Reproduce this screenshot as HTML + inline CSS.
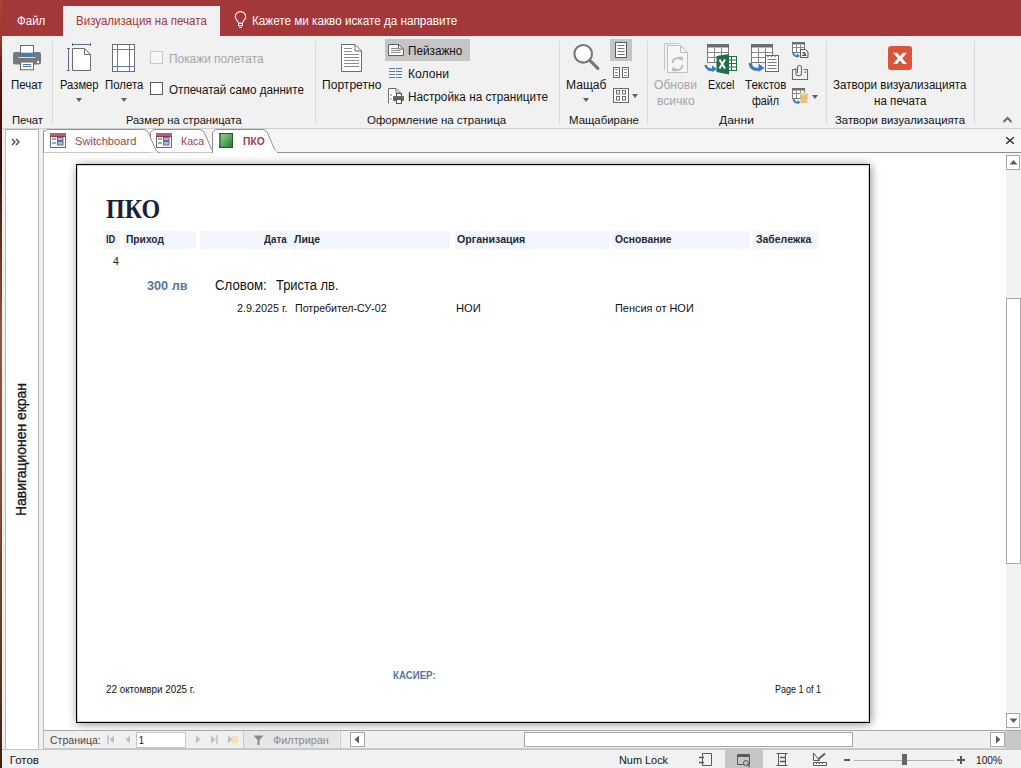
<!DOCTYPE html>
<html><head><meta charset="utf-8">
<style>
*{margin:0;padding:0;box-sizing:border-box}
html,body{width:1021px;height:768px;overflow:hidden;background:#fff;font-family:"Liberation Sans",sans-serif;position:relative}
.a{position:absolute;white-space:nowrap}
.t{font-size:12px;color:#262626;line-height:14px}
.sep{position:absolute;width:1px;background:#dadada}
.glab{position:absolute;font-size:12px;color:#262626;line-height:14px;top:113px}
.arr{position:absolute;width:0;height:0;border-left:3.5px solid transparent;border-right:3.5px solid transparent;border-top:4px solid #606060}
.rep{font-family:"Liberation Sans",sans-serif}
</style></head><body>
<!-- title/tab bar -->
<div class="a" style="left:0;top:0;width:1021px;height:36px;background:#a4373a"></div>
<div class="a" style="left:0;top:0;width:2px;height:768px;background:linear-gradient(#b04430 0px,#a03828 36px,#5a1410 80px,#3a0c08 160px,#6a3a22 260px,#8a5a3a 330px,#7a4a2e 520px,#5a3420 680px,#3a2212 768px)"></div>
<div class="a" style="left:63px;top:6px;width:157px;height:32px;background:#f1f1f1"></div>
<svg class="a" style="left:230px;top:8px" width="22" height="24" viewBox="230 8 22 24"><path d="M238.5 23.3c0-2-3.2-3.6-3.2-6.5a5.2 5.2 0 0 1 10.4 0c0 2.9-3.2 4.5-3.2 6.5z" fill="none" stroke="#fff" stroke-width="1.1"/><rect x="238.5" y="23.5" width="4" height="2.2" fill="none" stroke="#fff"/><path d="M239 27.5h3" stroke="#fff"/></svg>

<!-- ribbon -->
<div class="a" style="left:2px;top:36px;width:1019px;height:93px;background:#f1f1f1"></div>
<div class="a" style="left:2px;top:128px;width:1019px;height:1px;background:#d4d4d4"></div>


<!-- ===== Печат group ===== -->
<svg class="a" style="left:8px;top:40px" width="40" height="36" viewBox="8 40 40 36">
<rect x="13" y="52" width="28" height="12.5" rx="2.2" fill="#787878"/>
<rect x="20.5" y="45.5" width="13" height="8" fill="#fff" stroke="#6a6a6a"/>
<rect x="19" y="52.7" width="16" height="4" fill="#4a78b0"/>
<rect x="18.5" y="57" width="17" height="1" fill="#d8dde5"/>
<rect x="37" y="61" width="2" height="2" fill="#fff"/>
<rect x="20.5" y="62" width="13" height="7.8" fill="#fff" stroke="#6a6a6a"/>
<path d="M23 64.5h8M23 66.5h8" stroke="#4a78b0"/>
</svg>
<div class="sep" style="left:52px;top:41px;height:83px"></div>

<!-- ===== Размер на страницата ===== -->
<svg class="a" style="left:62px;top:40px" width="40" height="34" viewBox="62 40 40 34">
<path d="M72.5 44.5h18M72.5 43v3M90.5 43v3" stroke="#5a6f8f"/>
<path d="M68.5 48.5v22M67 48.5h3M67 70.5h3" stroke="#5a6f8f"/>
<path d="M72.5 48.5H84.5L90.5 54.5V70.5H72.5Z" fill="#fff" stroke="#6d6d6d"/>
<path d="M84.5 48.5V54.5H90.5" fill="none" stroke="#6d6d6d"/>
</svg>
<div class="arr" style="left:76px;top:98px"></div>
<svg class="a" style="left:108px;top:40px" width="32" height="34" viewBox="108 40 32 34">
<rect x="112.5" y="44.5" width="22" height="27" fill="#fff" stroke="#6d6d6d"/>
<path d="M117.5 44.5v27M129.5 44.5v27M112.5 49.5h22M112.5 66.5h22" stroke="#5b7fae"/>
</svg>
<div class="arr" style="left:121px;top:98px"></div>
<div class="a" style="left:150px;top:51px;width:13px;height:13px;border:1px solid #c8c8c8;background:#f7f7f7"></div>
<div class="a" style="left:150px;top:82px;width:13px;height:13px;border:1px solid #5a5a5a;background:#fff"></div>
<div class="sep" style="left:315px;top:41px;height:83px"></div>

<!-- ===== Оформление на страница ===== -->
<div class="a" style="left:385px;top:39px;width:85px;height:22px;background:#c5c5c5"></div>
<svg class="a" style="left:330px;top:38px" width="90" height="70" viewBox="330 38 90 70">
<path d="M341.5 44.5H355L361.5 51V71.5H341.5Z" fill="#fff" stroke="#6d6d6d"/>
<path d="M355 44.5V51H361.5" fill="none" stroke="#6d6d6d"/>
<path d="M344 48.5h8M344 51.5h8M344 54.5h15M344 57.5h15M344 60.5h15M344 63.5h15M344 66.5h15" stroke="#8c8c8c"/>
<path d="M388.5 44.5H398.5L403.5 49V55.5H388.5Z" fill="#fff" stroke="#5f5f5f"/>
<path d="M398.5 44.5V49H403.5" fill="none" stroke="#5f5f5f"/>
<path d="M391 48.5h8M391 50.5h9.5M391 52.5h9.5" stroke="#8a8a8a"/>
<path d="M389 68.5h6M389 71.5h6M389 74.5h6M389 77.5h6M396 68.5h6M396 71.5h6M396 74.5h6M396 77.5h6" stroke="#5a7aa8"/>
<path d="M388.5 103.5V88.5H396L400.5 93V95" fill="#fff" stroke="#6d6d6d"/>
<path d="M396 88.5V93H400.5" fill="none" stroke="#6d6d6d"/>
<circle cx="391" cy="95" r="1" fill="#9a9a9a"/>
<path d="M390 99h2" stroke="#9a9a9a"/>
<rect x="396.5" y="93.5" width="5" height="3" fill="#fff" stroke="#555"/>
<rect x="393" y="96" width="11" height="5" rx="1" fill="#666"/>
<rect x="396.5" y="99.5" width="5" height="4" fill="#fff" stroke="#555"/>
</svg>
<div class="sep" style="left:559px;top:41px;height:83px"></div>

<!-- ===== Мащабиране ===== -->
<svg class="a" style="left:568px;top:38px" width="70" height="68" viewBox="568 38 70 68">
<circle cx="583.2" cy="53.8" r="8.8" fill="#fff" stroke="#767676" stroke-width="2.1"/>
<path d="M589.8 60.4l8 8" stroke="#767676" stroke-width="3.2" stroke-linecap="round"/>
</svg>
<div class="a" style="left:583px;top:98px;width:0;height:0;border-left:3.5px solid transparent;border-right:3.5px solid transparent;border-top:4px solid #606060"></div>
<div class="a" style="left:610px;top:39px;width:22px;height:22px;background:#c5c5c5"></div>
<svg class="a" style="left:605px;top:38px" width="35" height="68" viewBox="605 38 35 68">
<rect x="615.5" y="42.5" width="11" height="15" fill="#fff" stroke="#5a5a5a"/>
<path d="M617.5 45.5h7M617.5 48.5h7M617.5 51.5h7M617.5 54.5h7" stroke="#7a7a7a"/>
<rect x="613.5" y="67.5" width="6" height="10" fill="#fff" stroke="#6d6d6d"/>
<rect x="622.5" y="67.5" width="6" height="10" fill="#fff" stroke="#6d6d6d"/>
<path d="M615 69.5h3M615 72.5h3M615 75.5h3M624 69.5h3M624 72.5h3M624 75.5h3" stroke="#8a8a8a"/>
<rect x="613.5" y="88.5" width="15" height="14" fill="#fff" stroke="#6d6d6d"/>
<rect x="616.5" y="90.5" width="3" height="3.5" fill="none" stroke="#6d6d6d"/>
<rect x="622.5" y="90.5" width="3" height="3.5" fill="none" stroke="#6d6d6d"/>
<rect x="616.5" y="96.5" width="3" height="3.5" fill="none" stroke="#6d6d6d"/>
<rect x="622.5" y="96.5" width="3" height="3.5" fill="none" stroke="#6d6d6d"/>
</svg>
<div class="arr" style="left:632px;top:94px"></div>
<div class="sep" style="left:647px;top:41px;height:83px"></div>

<!-- ===== Данни ===== -->
<svg class="a" style="left:650px;top:38px" width="180" height="72" viewBox="650 38 180 72">
<!-- refresh -->
<path d="M664.5 70V43.5H679" fill="none" stroke="#c6c6c6"/>
<path d="M667.5 45.5H680.5L687.5 52.5V72.5H667.5Z" fill="#f6f6f6" stroke="#c0c0c0"/>
<path d="M680.5 45.5V52.5H687.5" fill="none" stroke="#c0c0c0"/>
<path d="M672.5 63a5 5 0 0 1 8.5-3.5" fill="none" stroke="#bdbdbd" stroke-width="2"/>
<path d="M682.5 65a5 5 0 0 1-8.5 3.5" fill="none" stroke="#bdbdbd" stroke-width="2"/>
<path d="M678.5 56.5l4.5 0.5-0.5 4.5z" fill="#bdbdbd"/>
<path d="M676.5 71.5l-4.5-0.5 0.5-4.5z" fill="#bdbdbd"/>
<!-- excel -->
<rect x="707.5" y="44.5" width="21" height="18" fill="#fff" stroke="#7a7a7a"/>
<rect x="707" y="44" width="22" height="3.5" fill="#6d6d6d"/>
<path d="M714.5 47.5v15M721.5 47.5v15M707.5 52.5h21M707.5 57.5h21" stroke="#8a8a8a"/>
<rect x="727.5" y="56.5" width="9" height="14" fill="#fff" stroke="#1e7145"/>
<path d="M727.5 60h9M727.5 63.5h9M727.5 67h9M731.5 56.5v14" stroke="#1e7145"/>
<path d="M716.5 56L729 54V74.5L716.5 72Z" fill="#1e7145"/>
<path d="M719.5 59.5l5.5 9M725 59.5l-5.5 9" stroke="#fff" stroke-width="2"/>
<path d="M705.5 65c1 4 5 6 8.5 4" fill="none" stroke="#3f78c0" stroke-width="2.6"/>
<path d="M712 65.5l5 3.5-5 3z" fill="#3f78c0"/>
<!-- text file -->
<rect x="751.5" y="44.5" width="21" height="18" fill="#fff" stroke="#7a7a7a"/>
<rect x="751" y="44" width="22" height="3.5" fill="#6d6d6d"/>
<path d="M758.5 47.5v15M765.5 47.5v15M751.5 52.5h21M751.5 57.5h21" stroke="#8a8a8a"/>
<rect x="765.5" y="55.5" width="13" height="16" fill="#fff" stroke="#6a6a6a"/>
<path d="M768 55v2M771.5 55v2M775 55v2" stroke="#6a6a6a" stroke-width="1.2"/>
<path d="M767.5 59.5h9M767.5 62.5h9M767.5 65.5h9M767.5 68.5h9" stroke="#7a7a7a"/>
<path d="M750 63c1 6 6 8 11 5" fill="none" stroke="#3f78c0" stroke-width="3.2"/>
<path d="M758.5 63.5l6 4.5-6 4z" fill="#3f78c0"/>
<!-- small 1 -->
<rect x="792.5" y="42.5" width="12" height="10" fill="#fff" stroke="#7a7a7a"/>
<rect x="792" y="42" width="13" height="2.5" fill="#6d6d6d"/>
<path d="M796.5 44.5v8M800.5 44.5v8M792.5 47.5h12" stroke="#8a8a8a"/>
<path d="M800.5 49.5h5l2.5 2.5v5.5h-7.5z" fill="#fff" stroke="#555"/>
<path d="M802 55.5h4.5M804.2 52v3.5M802.5 52.5l3.5 2" stroke="#555" stroke-width="1.2"/>
<path d="M793 52.5c0.5 3 3 4.5 5.5 3" fill="none" stroke="#3f78c0" stroke-width="1.8"/>
<path d="M797 53.5l3 2.5-3 1.8z" fill="#3f78c0"/>
<!-- attachment -->
<path d="M795.5 69.5h-3v10h15v-10h-4" fill="none" stroke="#6a6a6a" stroke-width="1.1"/>
<path d="M797.5 73V67.5a2 2 0 0 1 4 0V73a2.8 2.8 0 0 1-5.6 0V68" fill="none" stroke="#6a6a6a" stroke-width="1.1"/>
<rect x="804.5" y="71.5" width="1.5" height="1.5" fill="#6a6a6a"/>
<!-- small 3 -->
<rect x="792.5" y="88.5" width="12" height="10" fill="#fff" stroke="#7a7a7a"/>
<rect x="792" y="88" width="13" height="2.5" fill="#6d6d6d"/>
<path d="M796.5 90.5v8M800.5 90.5v8M792.5 93.5h12" stroke="#8a8a8a"/>
<path d="M800 93.5h8l-0.8 9.5h-6.4z" fill="#e6c27a"/>
<ellipse cx="804" cy="93.5" rx="4" ry="1.3" fill="#f1d9a6"/>
<path d="M793.5 99c0.5 3 3 4.5 5.5 3" fill="none" stroke="#3f78c0" stroke-width="1.8"/>
<path d="M797.5 100l3 2.5-3 1.8z" fill="#3f78c0"/>
</svg>
<div class="arr" style="left:812px;top:95px"></div>
<div class="sep" style="left:826px;top:41px;height:83px"></div>

<!-- ===== Затвори ===== -->
<div class="a" style="left:888px;top:46px;width:24px;height:24px;background:#d8553a;border-radius:3px"></div>
<svg class="a" style="left:888px;top:46px" width="24" height="24" viewBox="888 46 24 24"><path d="M893 52.7h4.2l2.8 3.6 2.8-3.6h4.2l-4.8 5.6 4.8 5.6h-4.2l-2.8-3.6-2.8 3.6h-4.2l4.8-5.6z" fill="#fff"/></svg>
<div class="sep" style="left:974px;top:41px;height:83px"></div>
<svg class="a" style="left:1000px;top:114px" width="16" height="12" viewBox="1000 114 16 12"><path d="M1003.5 122l4-4 4 4" fill="none" stroke="#6a6a6a" stroke-width="2"/></svg>


<!-- ===== nav pane ===== -->
<div class="a" style="left:2px;top:129px;width:4px;height:621px;background:#f1f1f1"></div>
<div class="a" style="left:5px;top:129px;width:34px;height:620px;background:#fff;border-left:1px solid #b9b9b9;border-right:1px solid #b9b9b9;border-top:1px solid #b0b0b0"></div>
<div class="a" style="left:39px;top:129px;width:5px;height:620px;background:#f1f1f1"></div>
<div class="a" style="left:43px;top:129px;width:1px;height:620px;background:#b9b9b9"></div>
<svg class="a" style="left:11px;top:138px" width="10" height="8" viewBox="0 0 10 8"><path d="M1 1l3 3-3 3M5 1l3 3-3 3" fill="none" stroke="#444" stroke-width="1.3"/></svg>
<div class="a" style="left:12px;top:516px;transform:rotate(-90deg) scaleX(0.995);transform-origin:0 0;font-size:14px;color:#1a1a1a;line-height:18px;-webkit-text-stroke:0.35px #1a1a1a">Навигационен екран</div>

<!-- ===== document tabs row ===== -->
<div class="a" style="left:44px;top:129px;width:977px;height:24px;background:#f5f5f5"></div>
<div class="a" style="left:2px;top:128px;width:1019px;height:1px;background:#cfcfcf"></div>
<div class="a" style="left:44px;top:152px;width:977px;height:1px;background:#8f8f8f"></div>
<svg class="a" style="left:40px;top:127px" width="260" height="27" viewBox="40 127 260 27">
<path d="M150.5 152.5V132.5l3-3H199c3 0 4.5 1.5 6 4.5l5.5 13c1.5 3.5 2.5 5.5 5.5 5.5" fill="#fff" stroke="#8f8f8f"/>
<path d="M43.5 152.5V132.5l3-3H143c3 0 4.5 1.5 6 4.5l5.5 13c1.5 3.5 2.5 5.5 5.5 5.5" fill="#fff" stroke="#8f8f8f"/>
<path d="M212.5 153V132.5l3-3H262c3 0 4.5 1.5 6 4.5l5.5 13c1.5 3.5 2.5 5.5 5.5 5.5H300" fill="#fff" stroke="#8f8f8f"/>
<rect x="213" y="151" width="64" height="3" fill="#fff"/>
</svg>
<svg class="a" style="left:50px;top:133px" width="16" height="15" viewBox="0 0 16 15">
<rect x="0.5" y="0.5" width="15" height="14" fill="#f6f7fc" stroke="#666c7e"/>
<rect x="0" y="0" width="16" height="3" fill="#c05a78"/>
<path d="M0.5 3.5h15" stroke="#8a3a52"/>
<path d="M2 6h4M2 10h4" stroke="#4e5666"/>
<rect x="7.5" y="4.5" width="5.5" height="3" fill="#a6bcdc" stroke="#5a7294"/>
<rect x="7.5" y="8.5" width="5.5" height="3.5" fill="#a6bcdc" stroke="#5a7294"/>
</svg>
<svg class="a" style="left:156px;top:133px" width="16" height="15" viewBox="0 0 16 15">
<rect x="0.5" y="0.5" width="15" height="14" fill="#f6f7fc" stroke="#666c7e"/>
<rect x="0" y="0" width="16" height="3" fill="#c05a78"/>
<path d="M0.5 3.5h15" stroke="#8a3a52"/>
<path d="M2 6h4M2 10h4" stroke="#4e5666"/>
<rect x="7.5" y="4.5" width="5.5" height="3" fill="#a6bcdc" stroke="#5a7294"/>
<rect x="7.5" y="8.5" width="5.5" height="3.5" fill="#a6bcdc" stroke="#5a7294"/>
</svg>
<svg class="a" style="left:219px;top:133px" width="14" height="15" viewBox="0 0 14 15">
<defs><linearGradient id="gg" x1="0" y1="0" x2="1" y2="1"><stop offset="0" stop-color="#8fd08f"/><stop offset="1" stop-color="#2c7a34"/></linearGradient></defs>
<rect x="0" y="0" width="14" height="15" fill="#2a5a2a"/>
<rect x="2" y="1" width="11" height="13" fill="url(#gg)"/>
<path d="M1 1.5v12" stroke="#d8e8d8" stroke-dasharray="1 1"/>
</svg>
<svg class="a" style="left:1004px;top:135px" width="12" height="11" viewBox="1004 135 12 11"><path d="M1006.2 137.2l7.6 6.6M1013.8 137.2l-7.6 6.6" stroke="#2a2a2a" stroke-width="1.4"/></svg>

<!-- ===== preview area ===== -->
<div class="a" style="left:44px;top:153px;width:962px;height:578px;background:#fff"></div>
<!-- page shadow -->
<div class="a" style="left:76px;top:164px;width:794px;height:559px;box-shadow:1px 1px 9px rgba(0,0,0,0.45)"></div>
<div class="a" style="left:76px;top:164px;width:794px;height:559px;background:#fff;border:1px solid #000;box-shadow:inset 0 0 0 1px rgba(0,0,0,0.18)"></div>

<!-- ===== vertical scrollbar ===== -->
<div class="a" style="left:1006px;top:153px;width:15px;height:578px;background:#f2f2f2"></div>
<div class="a" style="left:1006px;top:155px;width:14px;height:15px;background:#fff;border:1px solid #a8a8a8"></div>
<svg class="a" style="left:1009px;top:159px" width="9" height="6" viewBox="0 0 9 6"><path d="M0.5 5.5L4.5 1l4 4.5z" fill="#606060"/></svg>
<div class="a" style="left:1006px;top:298px;width:15px;height:266px;background:#fff;border:1px solid #a8a8a8"></div>
<div class="a" style="left:1006px;top:713px;width:14px;height:15px;background:#fff;border:1px solid #a8a8a8"></div>
<svg class="a" style="left:1009px;top:718px" width="9" height="6" viewBox="0 0 9 6"><path d="M0.5 0.5L4.5 5l4-4.5z" fill="#606060"/></svg>

<!-- ===== bottom record bar ===== -->
<div class="a" style="left:44px;top:730px;width:977px;height:19px;background:#f0f0f0;border-top:1px solid #a8a8a8;border-bottom:1px solid #c8c8c8"></div>
<svg class="a" style="left:107px;top:735px" width="8" height="9" viewBox="0 0 8 9"><path d="M1 0v9" stroke="#c0c0c0" stroke-width="1.5"/><path d="M7 0.5v8L2.5 4.5z" fill="#c0c0c0"/></svg>
<svg class="a" style="left:125px;top:735px" width="6" height="9" viewBox="0 0 6 9"><path d="M5 0.5v8L0.5 4.5z" fill="#c0c0c0"/></svg>
<div class="a" style="left:136px;top:732px;width:50px;height:16px;background:#fff;border:1px solid #c6c6c6"></div>
<svg class="a" style="left:195px;top:735px" width="6" height="9" viewBox="0 0 6 9"><path d="M1 0.5v8L5.5 4.5z" fill="#c0c0c0"/></svg>
<svg class="a" style="left:210px;top:735px" width="8" height="9" viewBox="0 0 8 9"><path d="M1 0.5v8L5.5 4.5z" fill="#c0c0c0"/><path d="M7 0v9" stroke="#c0c0c0" stroke-width="1.5"/></svg>
<svg class="a" style="left:227px;top:735px" width="11" height="9" viewBox="0 0 11 9"><path d="M1 0.5v8L5.5 4.5z" fill="#c0c0c0"/><rect x="5" y="1" width="6" height="7" fill="#f3e2b0"/></svg>
<div class="a" style="left:243px;top:731px;width:1px;height:18px;background:#c8c8c8"></div>
<div class="a" style="left:244px;top:731px;width:95px;height:17px;background:#e6e6e6"></div>
<svg class="a" style="left:253px;top:735px" width="11" height="10" viewBox="0 0 11 10"><path d="M0.5 0.5h10L6.5 5v5h-2V5z" fill="#8a8a8a"/></svg>
<div class="a" style="left:340px;top:731px;width:1px;height:18px;background:#c8c8c8"></div>
<div class="a" style="left:350px;top:732px;width:15px;height:15px;background:#fff;border:1px solid #a8a8a8"></div>
<svg class="a" style="left:354px;top:735px" width="6" height="9" viewBox="0 0 6 9"><path d="M5 0.5v8L0.5 4.5z" fill="#606060"/></svg>
<div class="a" style="left:524px;top:732px;width:329px;height:15px;background:#fff;border:1px solid #a8a8a8"></div>
<div class="a" style="left:990px;top:732px;width:15px;height:15px;background:#fff;border:1px solid #a8a8a8"></div>
<svg class="a" style="left:995px;top:735px" width="6" height="9" viewBox="0 0 6 9"><path d="M1 0.5v8L5.5 4.5z" fill="#606060"/></svg>
<div class="a" style="left:1005px;top:731px;width:16px;height:18px;background:#c8c8c8"></div>

<!-- ===== status bar ===== -->
<div class="a" style="left:2px;top:749px;width:1019px;height:19px;background:#f1f1f1;border-top:1px solid #c6c6c6"></div>
<div class="a" style="left:725px;top:749px;width:38px;height:19px;background:#c5c5c5"></div>
<svg class="a" style="left:695px;top:750px" width="140" height="18" viewBox="695 750 140 18">
<path d="M702.5 753.5h9v12h-9z" fill="none" stroke="#5a5a5a"/>
<path d="M699 757.5h5M699 762.5h5" stroke="#5a5a5a" stroke-width="1.4"/>
<path d="M737.5 754.5h12v10h-12z" fill="none" stroke="#5a5a5a"/>
<path d="M737.5 756h12" stroke="#5a5a5a" stroke-width="2"/>
<circle cx="746" cy="763" r="2.5" fill="#c5c5c5" stroke="#5a5a5a"/>
<path d="M747.8 764.8l2 2" stroke="#5a5a5a" stroke-width="1.3"/>
<path d="M776.5 753.5h11M776.5 765.5h11M778.5 753.5v12M785.5 753.5v12" fill="none" stroke="#5a5a5a"/>
<path d="M780 757.5h5M780 761.5h5" stroke="#5a5a5a" stroke-width="1.6"/>
<path d="M813.5 753v7.5h6z" fill="none" stroke="#5a5a5a"/>
<path d="M818 759.5l7-6" stroke="#5a5a5a" stroke-width="1.8"/>
<path d="M813.5 762.5h13v3h-13z" fill="none" stroke="#5a5a5a"/>
<path d="M816.5 762.5v1.5M819.5 762.5v1.5M822.5 762.5v1.5" stroke="#5a5a5a"/>
</svg>
<div class="a" style="left:844px;top:759px;width:6px;height:2px;background:#555"></div>
<div class="a" style="left:854px;top:760px;width:100px;height:1px;background:#b0b0b0"></div>
<div class="a" style="left:902px;top:754px;width:5px;height:11px;background:#666"></div>
<div class="a" style="left:957px;top:759px;width:8px;height:2px;background:#555"></div>
<div class="a" style="left:960px;top:756px;width:2px;height:8px;background:#555"></div>


<!-- report header row bg -->
<div class="a" style="left:104px;top:231px;width:16px;height:18px;background:#f2f6fc"></div>
<div class="a" style="left:124px;top:231px;width:72px;height:18px;background:#f2f6fc"></div>
<div class="a" style="left:200px;top:231px;width:250px;height:18px;background:#f2f6fc"></div>
<div class="a" style="left:455px;top:231px;width:154px;height:18px;background:#f2f6fc"></div>
<div class="a" style="left:612px;top:231px;width:138px;height:18px;background:#f2f6fc"></div>
<div class="a" style="left:753px;top:231px;width:65px;height:18px;background:#f2f6fc"></div>
<div class="a" style='left:17.40px;top:13px;font-size:12px;line-height:16px;color:#fff;transform:scaleX(0.959);transform-origin:0 0'>Файл</div>
<div class="a" style='left:75.80px;top:13px;font-size:12px;line-height:16px;color:#a4373a;transform:scaleX(0.962);transform-origin:0 0'>Визуализация на печата</div>
<div class="a" style='left:252.40px;top:13px;font-size:12px;line-height:16px;color:#fff;transform:scaleX(0.975);transform-origin:0 0'>Кажете ми какво искате да направите</div>
<div class="a" style='left:10.70px;top:77px;font-size:12px;line-height:16px;color:#141414;transform:scaleX(0.956);transform-origin:0 0'>Печат</div>
<div class="a" style='left:11.80px;top:113px;font-size:11px;line-height:15px;color:#141414;transform:scaleX(1.024);transform-origin:0 0'>Печат</div>
<div class="a" style='left:59.50px;top:77px;font-size:12px;line-height:16px;color:#141414;transform:scaleX(0.936);transform-origin:0 0'>Размер</div>
<div class="a" style='left:104.70px;top:77px;font-size:12px;line-height:16px;color:#141414;transform:scaleX(0.951);transform-origin:0 0'>Полета</div>
<div class="a" style='left:168.60px;top:51px;font-size:12px;line-height:16px;color:#a6a6a6;transform:scaleX(0.990);transform-origin:0 0'>Покажи полетата</div>
<div class="a" style='left:168.60px;top:82px;font-size:12px;line-height:16px;color:#141414;transform:scaleX(0.972);transform-origin:0 0'>Отпечатай само данните</div>
<div class="a" style='left:125.70px;top:113px;font-size:11px;line-height:15px;color:#141414;transform:scaleX(1.012);transform-origin:0 0'>Размер на страницата</div>
<div class="a" style='left:322.00px;top:77px;font-size:12px;line-height:16px;color:#141414;transform:scaleX(1.007);transform-origin:0 0'>Портретно</div>
<div class="a" style='left:407.70px;top:43px;font-size:12px;line-height:16px;color:#141414;transform:scaleX(0.978);transform-origin:0 0'>Пейзажно</div>
<div class="a" style='left:407.70px;top:66px;font-size:12px;line-height:16px;color:#141414;transform:scaleX(1.012);transform-origin:0 0'>Колони</div>
<div class="a" style='left:407.50px;top:89px;font-size:12px;line-height:16px;color:#141414;transform:scaleX(0.980);transform-origin:0 0'>Настройка на страниците</div>
<div class="a" style='left:367.00px;top:113px;font-size:11px;line-height:15px;color:#141414;transform:scaleX(1.038);transform-origin:0 0'>Оформление на страница</div>
<div class="a" style='left:566.40px;top:77px;font-size:12px;line-height:16px;color:#141414;transform:scaleX(1.006);transform-origin:0 0'>Мащаб</div>
<div class="a" style='left:568.60px;top:113px;font-size:11px;line-height:15px;color:#141414;transform:scaleX(1.037);transform-origin:0 0'>Мащабиране</div>
<div class="a" style='left:654.40px;top:77px;font-size:12px;line-height:16px;color:#a6a6a6;transform:scaleX(1.008);transform-origin:0 0'>Обнови</div>
<div class="a" style='left:656.80px;top:93px;font-size:12px;line-height:16px;color:#a6a6a6;transform:scaleX(1.011);transform-origin:0 0'>всичко</div>
<div class="a" style='left:707.80px;top:77px;font-size:12px;line-height:16px;color:#141414;transform:scaleX(0.896);transform-origin:0 0'>Excel</div>
<div class="a" style='left:744.50px;top:77px;font-size:12px;line-height:16px;color:#141414;transform:scaleX(0.959);transform-origin:0 0'>Текстов</div>
<div class="a" style='left:751.90px;top:93px;font-size:12px;line-height:16px;color:#141414;transform:scaleX(0.893);transform-origin:0 0'>файл</div>
<div class="a" style='left:719.00px;top:113px;font-size:11px;line-height:15px;color:#141414;transform:scaleX(1.094);transform-origin:0 0'>Данни</div>
<div class="a" style='left:832.80px;top:77px;font-size:12px;line-height:16px;color:#141414;transform:scaleX(0.969);transform-origin:0 0'>Затвори визуализацията</div>
<div class="a" style='left:874.00px;top:93px;font-size:12px;line-height:16px;color:#141414;transform:scaleX(0.968);transform-origin:0 0'>на печата</div>
<div class="a" style='left:834.80px;top:113px;font-size:11px;line-height:15px;color:#141414;transform:scaleX(1.029);transform-origin:0 0'>Затвори визуализацията</div>
<div class="a" style='left:74.50px;top:133px;font-size:11.5px;line-height:16px;color:#9e3f47;transform:scaleX(0.970);transform-origin:0 0'>Switchboard</div>
<div class="a" style='left:180.70px;top:133px;font-size:11.5px;line-height:16px;color:#9e3f47;transform:scaleX(0.917);transform-origin:0 0'>Каса</div>
<div class="a" style='left:242.60px;top:133px;font-size:11.5px;line-height:16px;color:#9e3f47;font-weight:bold;transform:scaleX(0.894);transform-origin:0 0'>ПКО</div>
<div class="a" style='left:49.70px;top:732px;font-size:11.5px;line-height:16px;color:#4a4a4a;transform:scaleX(0.918);transform-origin:0 0'>Страница:</div>
<div class="a" style='left:138.50px;top:732px;font-size:11.5px;line-height:16px;color:#000;transform:scaleX(0.750);transform-origin:0 0'>1</div>
<div class="a" style='left:273.00px;top:732px;font-size:11.5px;line-height:16px;color:#8a8a8a;transform:scaleX(0.943);transform-origin:0 0'>Филтриран</div>
<div class="a" style='left:9.70px;top:752px;font-size:11.5px;line-height:16px;color:#141414'>Готов</div>
<div class="a" style='left:618.60px;top:752px;font-size:11.5px;line-height:16px;color:#141414;transform:scaleX(0.948);transform-origin:0 0'>Num Lock</div>
<div class="a" style='left:975.70px;top:752px;font-size:11.5px;line-height:16px;color:#141414;transform:scaleX(0.887);transform-origin:0 0'>100%</div>
<div class="a" style='left:106.20px;top:194px;font-size:26.5px;line-height:31px;color:#17213a;font-weight:bold;font-family:"Liberation Serif";transform:scaleX(0.904);transform-origin:0 0'>ПКО</div>
<div class="a" style='left:105.60px;top:232px;font-size:11px;line-height:15px;color:#1f2838;font-weight:bold;transform:scaleX(0.850);transform-origin:0 0'>ID</div>
<div class="a" style='left:125.80px;top:232px;font-size:11px;line-height:15px;color:#1f2838;font-weight:bold;transform:scaleX(0.931);transform-origin:0 0'>Приход</div>
<div class="a" style='left:264.00px;top:232px;font-size:11px;line-height:15px;color:#1f2838;font-weight:bold;transform:scaleX(0.888);transform-origin:0 0'>Дата</div>
<div class="a" style='left:294.20px;top:232px;font-size:11px;line-height:15px;color:#1f2838;font-weight:bold;transform:scaleX(0.958);transform-origin:0 0'>Лице</div>
<div class="a" style='left:456.60px;top:232px;font-size:11px;line-height:15px;color:#1f2838;font-weight:bold;transform:scaleX(0.965);transform-origin:0 0'>Организация</div>
<div class="a" style='left:615.30px;top:232px;font-size:11px;line-height:15px;color:#1f2838;font-weight:bold;transform:scaleX(0.936);transform-origin:0 0'>Основание</div>
<div class="a" style='left:755.90px;top:232px;font-size:11px;line-height:15px;color:#1f2838;font-weight:bold;transform:scaleX(0.950);transform-origin:0 0'>Забележка</div>
<div class="a" style='left:113.20px;top:254px;font-size:11px;line-height:15px;color:#222;transform:scaleX(0.967);transform-origin:0 0'>4</div>
<div class="a" style='left:146.70px;top:277px;font-size:13.5px;line-height:18px;color:#55769c;font-weight:bold;transform:scaleX(0.940);transform-origin:0 0'>300 лв</div>
<div class="a" style='left:214.80px;top:276px;font-size:14px;line-height:18px;color:#111;transform:scaleX(0.944);transform-origin:0 0'>Словом:</div>
<div class="a" style='left:276.00px;top:276px;font-size:14px;line-height:18px;color:#111;transform:scaleX(0.922);transform-origin:0 0'>Триста лв.</div>
<div class="a" style='left:236.90px;top:301px;font-size:10.8px;line-height:15px;color:#111'>2.9.2025 г.</div>
<div class="a" style='left:294.80px;top:301px;font-size:10.8px;line-height:15px;color:#111;transform:scaleX(0.987);transform-origin:0 0'>Потребител-СУ-02</div>
<div class="a" style='left:456.00px;top:301px;font-size:10.8px;line-height:15px;color:#111;transform:scaleX(1.035);transform-origin:0 0'>НОИ</div>
<div class="a" style='left:615.00px;top:301px;font-size:10.8px;line-height:15px;color:#111;transform:scaleX(1.014);transform-origin:0 0'>Пенсия от НОИ</div>
<div class="a" style='left:392.70px;top:668px;font-size:11px;line-height:15px;color:#5677a0;font-weight:bold;transform:scaleX(0.881);transform-origin:0 0'>КАСИЕР:</div>
<div class="a" style='left:105.90px;top:682px;font-size:10.5px;line-height:15px;color:#111;transform:scaleX(0.938);transform-origin:0 0'>22 октомври 2025 г.</div>
<div class="a" style='left:774.50px;top:683px;font-size:10px;line-height:14px;color:#111;transform:scaleX(0.901);transform-origin:0 0'>Page 1 of 1</div>
</body></html>
